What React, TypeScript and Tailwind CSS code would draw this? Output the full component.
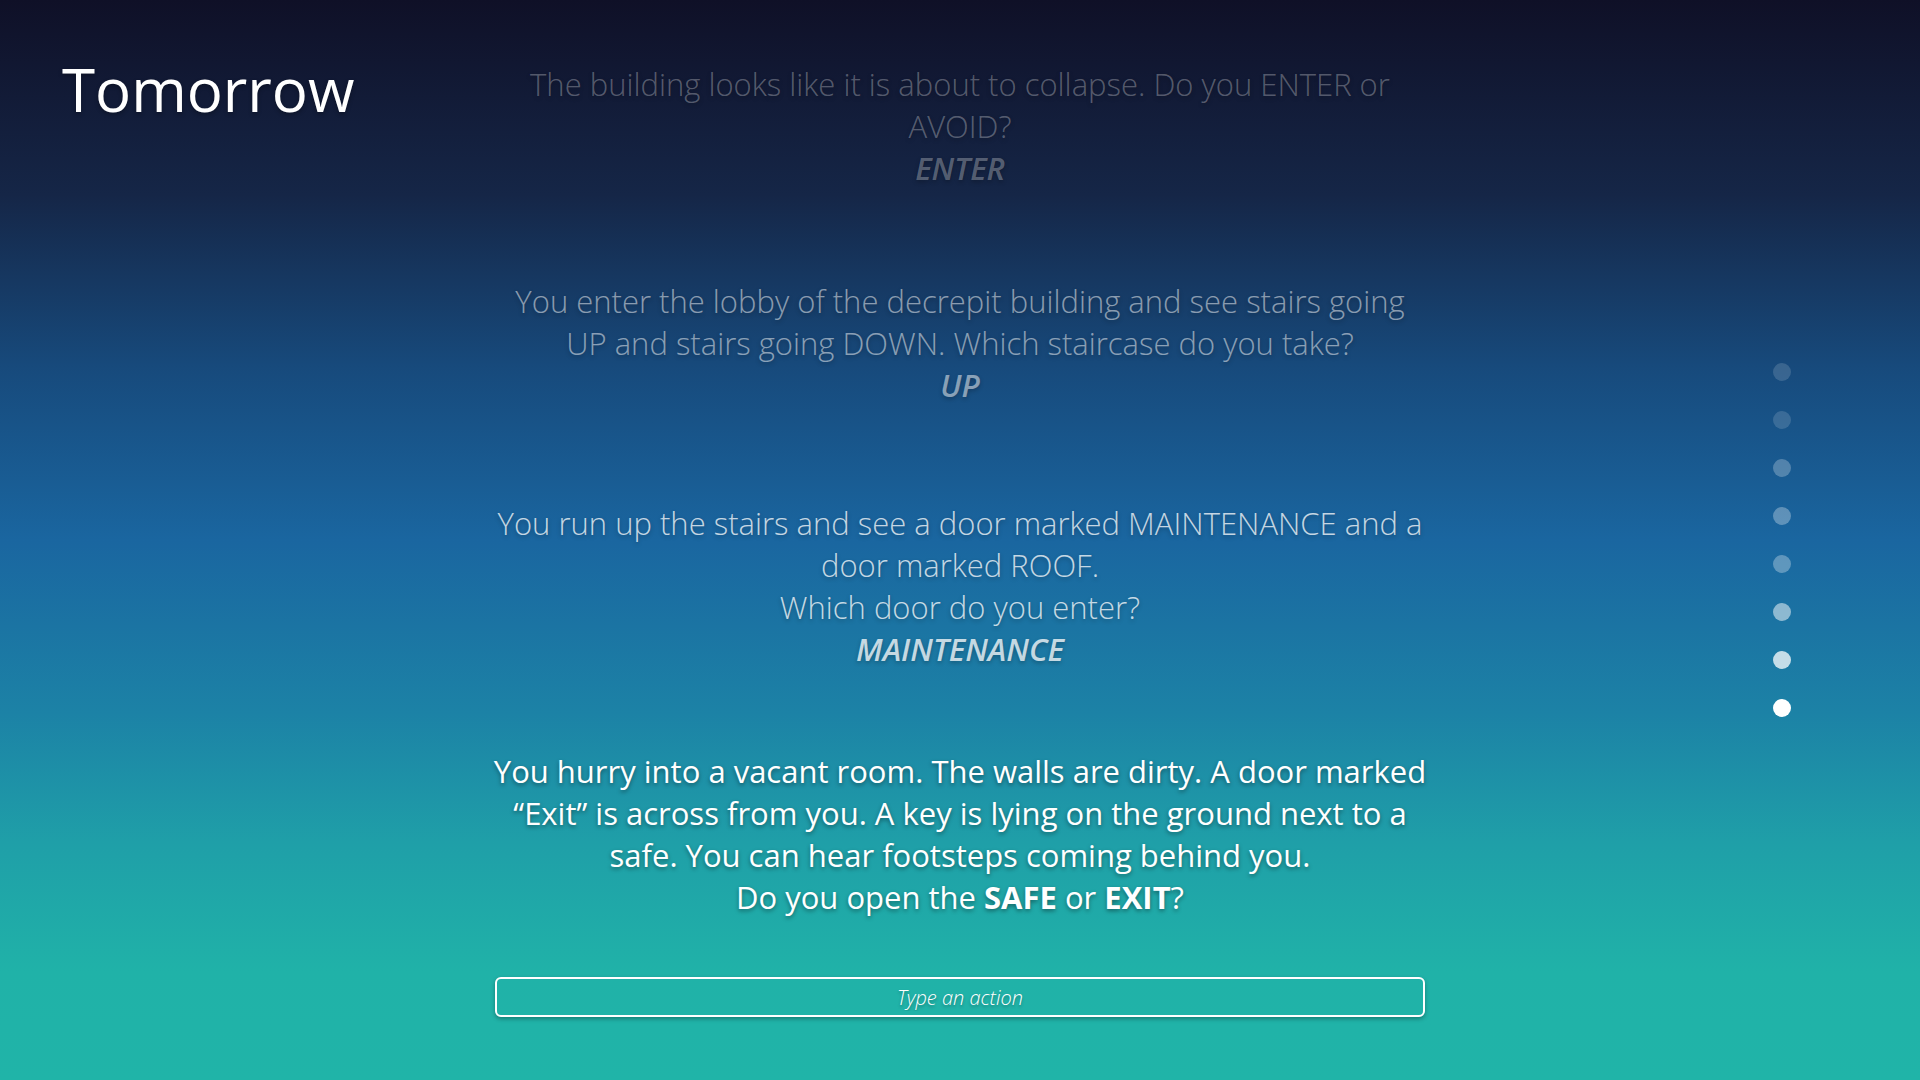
import React from 'react';

interface Entry {
  lines: React.ReactNode;
  answer: string;
  fade: string;
  gap: string;
}

const history: Entry[] = [
  {
    lines: 'The building looks like it is about to collapse. Do you ENTER or AVOID?',
    answer: 'ENTER',
    fade: 'text-white/30',
    gap: 'mt-0'
  },
  {
    lines: 'You enter the lobby of the decrepit building and see stairs going UP and stairs going DOWN. Which staircase do you take?',
    answer: 'UP',
    fade: 'text-white/50',
    gap: 'mt-[91px]'
  },
  {
    lines: (
      <>
        You run up the stairs and see a door marked MAINTENANCE and a door marked ROOF.
        <br />
        Which door do you enter?
      </>
    ),
    answer: 'MAINTENANCE',
    fade: 'text-white/75',
    gap: 'mt-[96px]'
  }
];

const dots = [
  'bg-white/15',
  'bg-white/15',
  'bg-white/25',
  'bg-white/30',
  'bg-white/30',
  'bg-white/50',
  'bg-white/75',
  'bg-white'
];

export default function App() {
  return (
    <div className="grid h-screen w-full grid-cols-[1fr_932px_1fr] overflow-hidden bg-[linear-gradient(to_bottom,#0f1027_0%,#152647_18%,#174a7c_34%,#1a66a0_50%,#1c82a6_66%,#1f9fa8_78%,#20b2a8_90%,#20b4a8_100%)] font-['Open_Sans',sans-serif]">
      <header className="pl-[62px] pt-[53px]">
        <h1 className="text-[60px] font-normal leading-[72px] text-white [text-shadow:0_2px_4px_rgba(0,0,0,0.3)]">
          Tomorrow
        </h1>
      </header>

      <main className="flex flex-col pt-[63px] text-center">
        {history.map((entry, i) => (
          <div
            key={i}
            className={`${entry.gap} ${entry.fade} text-[31px] font-light leading-[42px] [text-shadow:0_2px_4px_rgba(0,0,0,0.25)]`}
          >
            <p>{entry.lines}</p>
            <p className="font-semibold italic">{entry.answer}</p>
          </div>
        ))}

        <p className="-mx-[6px] mt-[80px] text-[31px] font-normal leading-[42px] text-white [text-shadow:0_2px_4px_rgba(0,0,0,0.4)]">
          You hurry into a vacant room. The walls are dirty. A door marked “Exit” is across from you. A key is lying on the ground next to a safe. You can hear footsteps coming behind you.
          <br />
          Do you open the <span className="font-bold">SAFE</span> or <span className="font-bold">EXIT</span>?
        </p>

        <input
          type="text"
          placeholder="Type an action"
          className="mx-px mt-[59px] h-10 rounded-md border-2 border-white bg-transparent text-center text-xl font-light italic text-white shadow-[0_2px_4px_rgba(0,0,0,0.3)] outline-none placeholder:text-white [text-shadow:0_2px_3px_rgba(0,0,0,0.3)]"
        />
      </main>

      <nav className="flex flex-col items-end justify-center gap-[30px] pr-[129px]">
        {dots.map((tone, i) => (
          <span key={i} className={`h-[18px] w-[18px] rounded-full ${tone}`} />
        ))}
      </nav>
    </div>
  );
}
